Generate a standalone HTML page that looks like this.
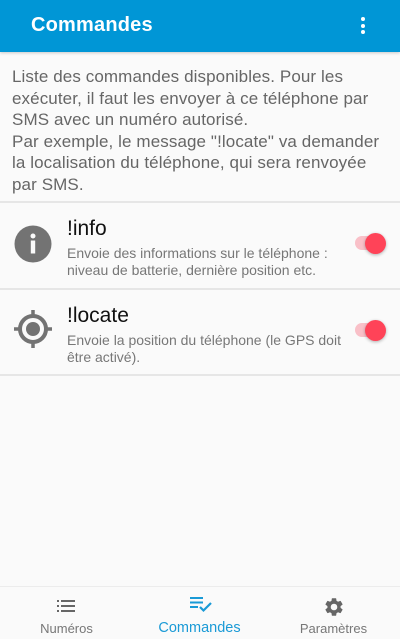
<!DOCTYPE html>
<html><head><meta charset="utf-8"><style>
*{margin:0;padding:0;box-sizing:border-box}
body{width:400px;height:639px;background:#fafafa;font-family:"Liberation Sans",sans-serif;position:relative;overflow:hidden}
.hdr{height:52px;background:#0096d6;color:#fff;position:relative;box-shadow:0 1px 3px rgba(0,0,0,.2)}
.hdr h1{position:absolute;left:31px;top:14px;font-size:20px;font-weight:bold;letter-spacing:0.2px}
.dots{position:absolute;left:361px;top:17px;width:5px}
.dots i{display:block;width:4px;height:4px;background:#fff;border-radius:50%;margin-bottom:2.5px}
.desc{position:absolute;left:12px;top:66px;white-space:nowrap;font-size:17px;line-height:21.5px;color:#666;letter-spacing:0.1px}
.line{position:absolute;left:0;width:400px;height:2px;background:#e6e6e6}
.row{position:absolute;left:0;width:400px;height:86px}
.row .t{position:absolute;left:67px;top:14px;font-size:21px;color:#111}
.row .s{position:absolute;left:67px;top:42px;font-size:14px;line-height:17px;color:#777;white-space:nowrap}
.row svg.ic{position:absolute;left:13px;top:21px}
.tr{position:absolute;left:355px;top:33px;width:30px;height:14px;border-radius:7px;background:#f9c0c8}
.th{position:absolute;left:365px;top:30px;width:21px;height:21px;border-radius:50%;background:#ff4358;box-shadow:0 1px 3px rgba(0,0,0,.3)}
.nav{position:absolute;left:0;top:586px;width:400px;height:53px;border-top:1px solid #ececec;background:#fafafa}
.nav div{position:absolute;top:0;width:133px;text-align:center;font-size:13px;color:#777}
.nav span{position:absolute;top:34px;left:0;width:100%}
</style></head><body>
<div class="hdr"><h1>Commandes</h1><div class="dots"><i></i><i></i><i></i></div></div>
<div class="desc">Liste des commandes disponibles. Pour les<br>exécuter, il faut les envoyer à ce téléphone par<br>SMS avec un numéro autorisé.<br>Par exemple, le message "!locate" va demander<br>la localisation du téléphone, qui sera renvoyée<br>par SMS.</div>
<div class="line" style="top:201px"></div>
<div class="row" style="top:203px">
<svg class="ic" width="40" height="40" viewBox="0 0 40 40"><circle cx="20" cy="20" r="18.5" fill="#737373"/><circle cx="20" cy="12" r="2.5" fill="#fafafa"/><rect x="17.8" y="16.5" width="4.4" height="13" fill="#fafafa"/></svg>
<div class="t">!info</div><div class="s">Envoie des informations sur le téléphone :<br>niveau de batterie, dernière position etc.</div>
<div class="tr"></div><div class="th"></div></div>
<div class="line" style="top:288px"></div>
<div class="row" style="top:290px">
<svg class="ic" width="42" height="42" viewBox="0 0 42 42" style="left:12px;top:18px"><circle cx="21" cy="21" r="13" fill="none" stroke="#737373" stroke-width="4"/><circle cx="21" cy="21" r="7" fill="#737373"/><path d="M21 2v6M21 34v6M2 21h6M34 21h6" stroke="#737373" stroke-width="3.5"/></svg>
<div class="t">!locate</div><div class="s">Envoie la position du téléphone (le GPS doit<br>être activé).</div>
<div class="tr"></div><div class="th"></div></div>
<div class="line" style="top:374px"></div>
<div class="nav">
<div style="left:0"><svg style="position:absolute;left:57px;top:13px" width="18" height="12" viewBox="0 0 18 12"><g fill="#666"><rect x="0" y="0" width="2" height="2"/><rect x="0" y="5" width="2" height="2"/><rect x="0" y="10" width="2" height="2"/><rect x="4" y="0" width="14" height="2"/><rect x="4" y="5" width="14" height="2"/><rect x="4" y="10" width="14" height="2"/></g></svg><span>Numéros</span></div>
<div style="left:133px;color:#1a9ad6"><svg style="position:absolute;left:57px;top:10px" width="22" height="16" viewBox="0 0 22 16"><g fill="#1a9ad6"><rect x="0" y="0" width="13" height="2"/><rect x="0" y="4.5" width="13" height="2"/><rect x="0" y="9" width="8" height="2"/></g><path d="M10 10l3.5 3.5L21 6" fill="none" stroke="#1a9ad6" stroke-width="2.2"/></svg><span style="font-size:14.5px;top:33px">Commandes</span></div>
<div style="left:267px"><svg style="position:absolute;left:56px;top:9px" width="22" height="22" viewBox="0 0 24 24"><path fill="#666" d="M19.14 12.94c.04-.3.06-.61.06-.94 0-.32-.02-.64-.07-.94l2.030-1.58a.49.49 0 0 0 .12-.61l-1.92-3.32a.49.49 0 0 0-.59-.22l-2.39.96c-.5-.38-1.03-.7-1.62-.94l-.36-2.54a.48.48 0 0 0-.48-.41h-3.84c-.24 0-.43.17-.47.41l-.36 2.54c-.59.24-1.13.57-1.62.94l-2.39-.96a.49.49 0 0 0-.59.22L2.74 8.87c-.12.21-.08.47.12.61l2.03 1.58c-.05.3-.09.63-.09.94s.02.64.07.94l-2.03 1.58a.49.49 0 0 0-.12.61l1.92 3.32c.12.22.37.29.59.22l2.39-.96c.5.38 1.03.7 1.62.94l.36 2.54c.05.24.24.41.48.41h3.840c.24 0 .44-.17.47-.41l.36-2.54c.59-.24 1.13-.56 1.62-.94l2.39.96c.22.08.47 0 .59-.22l1.92-3.32c.12-.22.07-.47-.12-.61l-2.01-1.58zM12 15.6A3.6 3.6 0 1 1 12 8.4a3.6 3.6 0 0 1 0 7.2z"/></svg><span>Paramètres</span></div>
</div>
</body></html>
